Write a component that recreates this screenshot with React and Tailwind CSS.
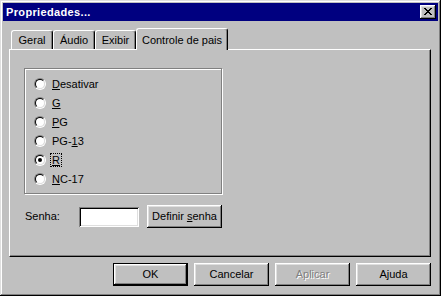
const raised =
  'shadow-[inset_-1px_-1px_0_#000,inset_1px_1px_0_#fff,inset_-2px_-2px_0_#808080,inset_2px_2px_0_#dfdfdf]';

function Button({ children, def, disabled, className = '' }) {
  const inner = (
    <div className={`w-full h-full flex items-center justify-center bg-[#c0c0c0] ${raised}`}>
      <span className={disabled ? 'text-[#808080] [text-shadow:1px_1px_0_#fff]' : 'text-black'}>{children}</span>
    </div>
  );
  if (def) {
    return <div className={`w-[75px] h-[23px] border border-black ${className}`}>{inner}</div>;
  }
  return <div className={`w-[75px] h-[23px] ${className}`}>{inner}</div>;
}

function Radio({ checked, children, focus }) {
  return (
    <div className="h-[19px] flex items-center">
      <div className="w-[12px] h-[12px] rounded-full border border-t-[#808080] border-l-[#808080] border-b-white border-r-white">
        <div className="w-[10px] h-[10px] rounded-full border border-t-black border-l-black border-b-[#dfdfdf] border-r-[#dfdfdf] bg-white flex items-center justify-center">
          {checked && <div className="w-[4px] h-[4px] rounded-full bg-black" />}
        </div>
      </div>
      <span
        className={`ml-[4px] px-[1px] leading-[12px] border ${
          focus ? 'border-dotted border-black' : 'border-transparent'
        }`}
      >
        {children}
      </span>
    </div>
  );
}

function Tab({ children, w, selected }) {
  if (selected) {
    return (
      <div
        className={`${w} h-[22px] -mb-[1px] -mx-[2px] relative z-10 bg-[#c0c0c0] border-t border-l border-white border-r border-r-black rounded-t-[3px] shadow-[inset_-1px_0_0_#808080] flex items-start justify-center pt-[3px]`}
      >
        {children}
      </div>
    );
  }
  return (
    <div
      className={`${w} h-[19px] mt-[2px] bg-[#c0c0c0] border-t border-l border-white border-r border-r-black rounded-t-[3px] shadow-[inset_-1px_0_0_#808080] flex items-center justify-center pt-[1px]`}
    >
      {children}
    </div>
  );
}

export default function App() {
  return (
    <div
      className="w-[441px] h-[296px] bg-[#c0c0c0] p-[3px] flex flex-col text-[11px] text-black shadow-[inset_-1px_-1px_0_#000,inset_1px_1px_0_#dfdfdf,inset_-2px_-2px_0_#808080,inset_2px_2px_0_#fff]"
      style={{ fontFamily: '"Liberation Sans", Arial, sans-serif' }}
    >
      {/* barra de título */}
      <div className="h-[18px] bg-[#000080] flex items-center justify-between pl-[3px] pr-[2px]">
        <span className="text-white font-bold text-[11px] tracking-[0.35px]">Propriedades...</span>
        <div className={`w-[16px] h-[14px] bg-[#c0c0c0] flex items-center justify-center ${raised}`}>
          <svg width="8" height="7" viewBox="0 0 8 7" shapeRendering="crispEdges" className="mb-[1px]">
            <path
              d="M0 0h2v1H0zM6 0h2v1H6zM1 1h2v1H1zM5 1h2v1H5zM2 2h4v1H2zM3 3h2v1H3zM2 4h4v1H2zM1 5h2v1H1zM5 5h2v1H5zM0 6h2v1H0zM6 6h2v1H6z"
              fill="#000"
            />
          </svg>
        </div>
      </div>

      <div className="pl-[6px] pt-[7px] flex flex-col">
        {/* abas */}
        <div className="flex pl-[2px] h-[21px]">
          <Tab w="w-[42px]">Geral</Tab>
          <Tab w="w-[42px]">Áudio</Tab>
          <Tab w="w-[41px]">Exibir</Tab>
          <div className="ml-[2px]">
            <Tab w="w-[92px]" selected>
              Controle de pais
            </Tab>
          </div>
        </div>

        {/* painel */}
        <div className="w-[422px] h-[208px] border border-t-white border-l-white border-b-black border-r-black shadow-[inset_-1px_-1px_0_#808080] pl-[14px] pt-[18px]">
          <div className="w-[198px] h-[126px] border border-[#808080] shadow-[1px_1px_0_#fff,inset_1px_1px_0_#fff] pl-[9px] pt-[5px]">
            <Radio>
              <u>D</u>esativar
            </Radio>
            <Radio>
              <u>G</u>
            </Radio>
            <Radio>
              <u>P</u>G
            </Radio>
            <Radio>
              PG-<u>1</u>3
            </Radio>
            <Radio checked focus>
              <u>R</u>
            </Radio>
            <Radio>
              <u>N</u>C-17
            </Radio>
          </div>

          <div className="flex items-center mt-[11px] h-[23px]">
            <span className="w-[55px] pl-[1px]">Senha:</span>
            <div className="w-[60px] h-[20px] bg-white shadow-[inset_1px_1px_0_#808080,inset_-1px_-1px_0_#fff,inset_2px_2px_0_#000,inset_-2px_-2px_0_#dfdfdf]" />
            <Button className="ml-[8px]">
              Definir <u>s</u>enha
            </Button>
          </div>
        </div>

        {/* botões */}
        <div className="w-[422px] flex justify-end gap-[6px] mt-[6px]">
          <Button def>OK</Button>
          <Button>Cancelar</Button>
          <Button disabled>Aplicar</Button>
          <Button>Ajuda</Button>
        </div>
      </div>
    </div>
  );
}
